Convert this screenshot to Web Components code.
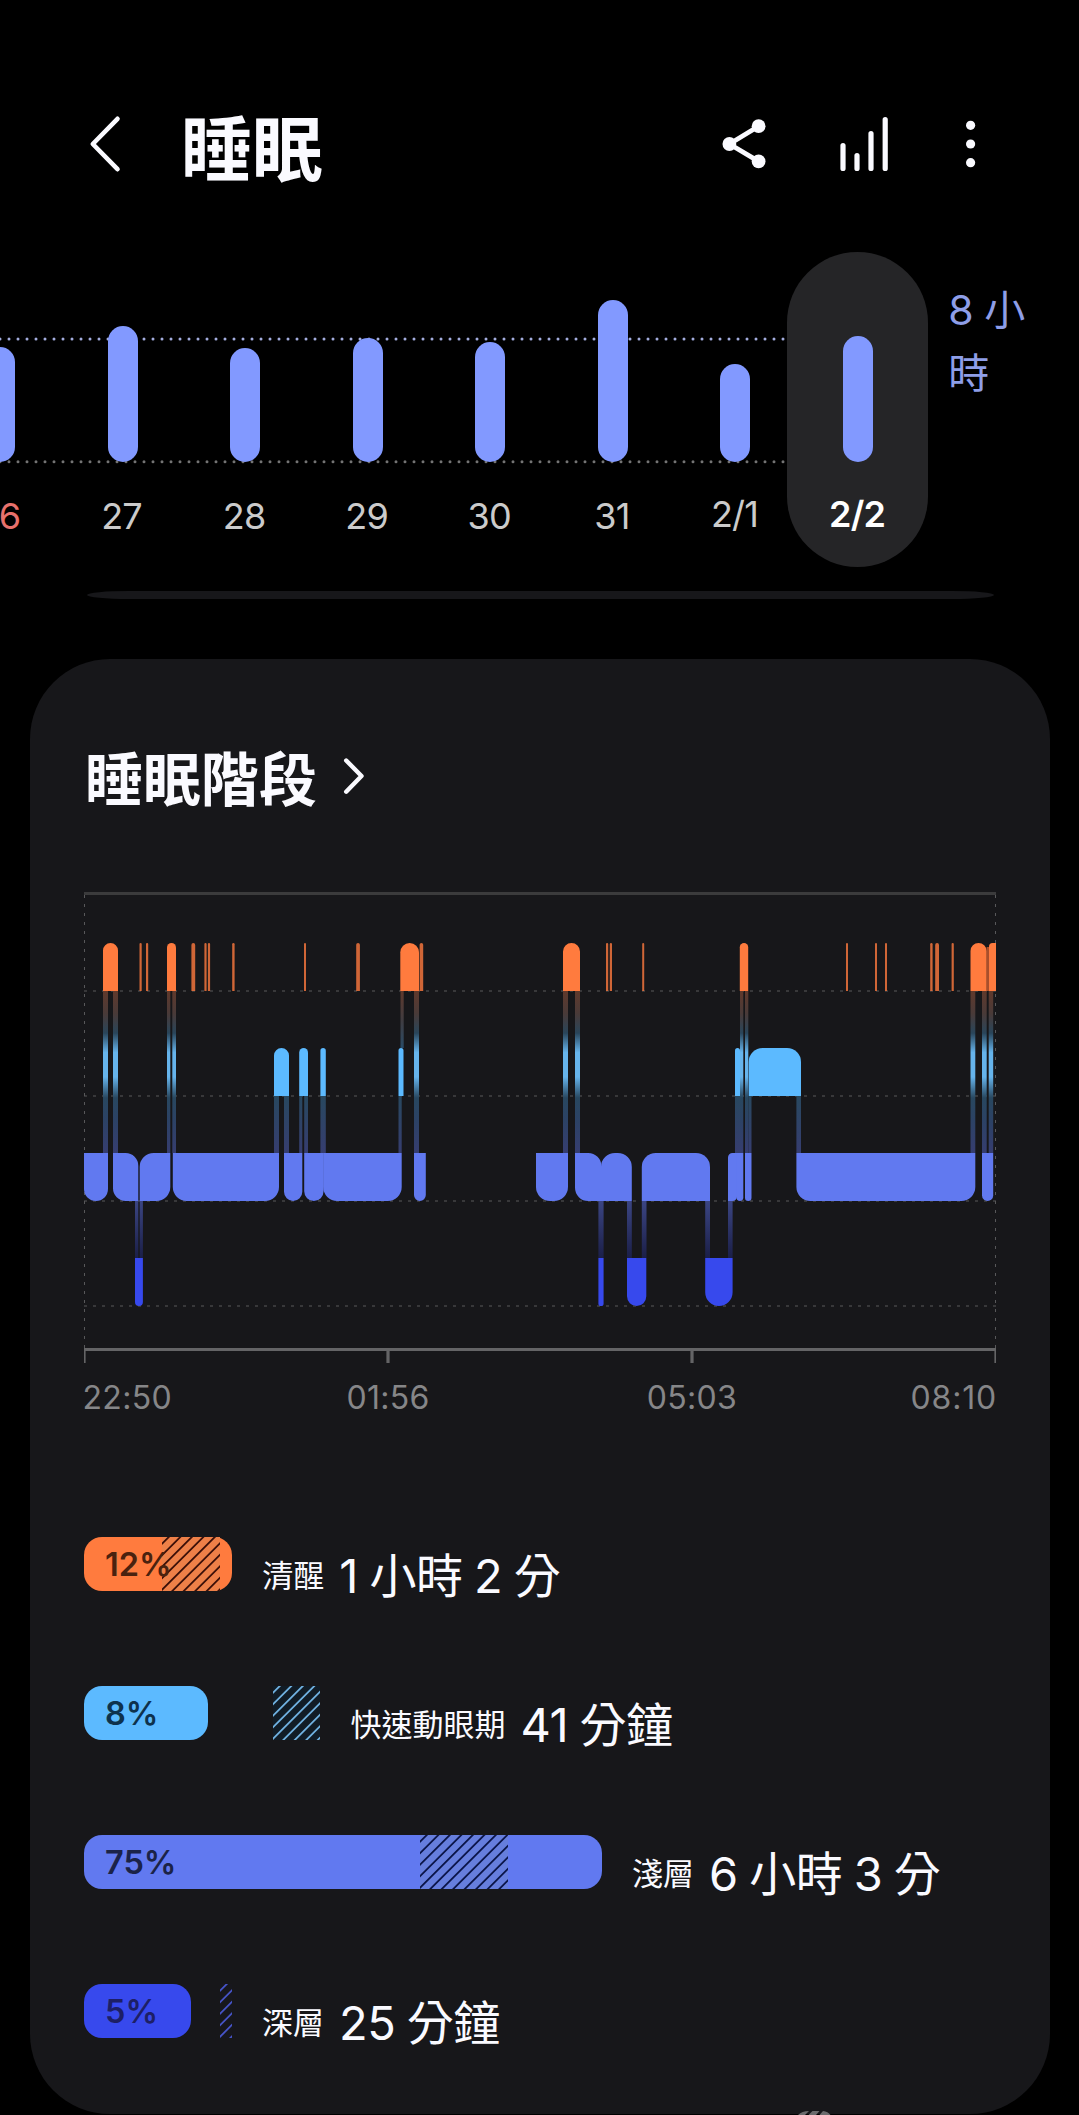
<!DOCTYPE html>
<html lang="zh-Hant">
<head>
<meta charset="UTF-8">
<title>睡眠</title>
<style>
  html, body {
    margin: 0;
    background: #000;
  }
  body {
    width: 1079px;
    height: 2115px;
    overflow: hidden;
    color: #fafaff;
    font-family: Inter, "Noto Sans CJK TC", sans-serif;
  }
</style>
</head>
<body>
<sleep-app></sleep-app>

<script>
// 各睡眠階段的顏色與縱向位置
const STAGES = {
  awake: { y: 943, color: '#ff7b3e' },
  rem: { y: 1048, color: '#5cbaff' },
  light: { y: 1153, color: '#6179f0' },
  deep: { y: 1258, color: '#3749ed' }
};
const STAGE_H = 48;

// 頂部標題列
class SleepHeader extends HTMLElement {
  constructor() {
    super();
    this.attachShadow({ mode: 'open' });
    this.shadowRoot.innerHTML = `
      <style>
        :host {
          display: flex;
          align-items: center;
          height: 252px;
          padding: 0 100px 0 84px;
          box-sizing: border-box;
        }
        svg { display: block; fill: none; stroke: #fafaff; stroke-linecap: round; stroke-linejoin: round; margin-top: 36px; }
        h1 {
          flex: 1;
          margin: 45px 0 0 55px;
          font-size: 71px;
          line-height: 100px;
          font-weight: 700;
        }
        .share { margin-right: 70px; }
        .stats { margin-right: 69px; }
      </style>
      <svg width="42" height="60" viewBox="84 114 42 60" stroke-width="4.6">
        <path d="M117.5 118.8L92.8 144l24.7 25.2"/>
      </svg>
      <h1><slot></slot></h1>
      <svg class="share" width="48" height="60" viewBox="720 114 48 60" stroke-width="4.8">
        <path d="M758.6 126.2L729.4 144l29.2 17.4"/>
        <g fill="#fafaff" stroke="none">
          <circle cx="729.4" cy="144" r="6.9"/>
          <circle cx="758.6" cy="126.2" r="6.9"/>
          <circle cx="758.6" cy="161.4" r="6.9"/>
        </g>
      </svg>
      <svg class="stats" width="52" height="60" viewBox="838 114 52 60" stroke-width="5.2">
        <path d="M843 145.5v23M857 155.5v13M871 133.5v35M885.2 119.5v49"/>
      </svg>
      <svg width="20" height="60" viewBox="959 114 20 60">
        <g fill="#fafaff" stroke="none">
          <circle cx="970.6" cy="125.3" r="4.6"/>
          <circle cx="970.6" cy="144" r="4.6"/>
          <circle cx="970.6" cy="162.7" r="4.6"/>
        </g>
      </svg>
    `;
  }
}

// 單日長條
class SleepDay extends HTMLElement {
  constructor() {
    super();
    this.attachShadow({ mode: 'open' });
  }

  connectedCallback() {
    const h = this.getAttribute('bar');
    this.shadowRoot.innerHTML = `
      <style>
        :host {
          position: relative;
          display: flex;
          flex-direction: column;
          align-items: center;
          justify-content: flex-end;
          width: 122.6px;
          height: 315px;
          color: #cbcbcb;
          font-size: 36px;
          flex: none;
        }
        :host([sunday]) { color: #e8716c; }
        /* 選取日的膠囊底 */
        :host([selected])::before {
          content: '';
          position: absolute;
          inset: 0 -8.7px 0 -9.7px;
          border-radius: 71px;
          background: #252527;
        }
        :host([selected]) { color: #fff; font-weight: 600; }
        .bar {
          position: relative;
          width: 30px;
          height: ${h}px;
          border-radius: 15px;
          background: #8299ff;
        }
        .label {
          position: relative;
          height: 73px;
          line-height: 44px;
          padding: 32px 2px 0 0;
          letter-spacing: -0.8px;
          white-space: nowrap;
        }
        :host([slash]) .label { height: 75px; padding-top: 30px; }
      </style>
      <div class="bar"></div>
      <div class="label"><slot></slot></div>
    `;
  }
}

// 每週長條圖
class SleepWeek extends HTMLElement {
  constructor() {
    super();
    this.attachShadow({ mode: 'open' });
    this.shadowRoot.innerHTML = `
      <style>
        :host { display: grid; width: 1079px; height: 315px; overflow: hidden; }
        svg, .days { grid-area: 1 / 1; }
        svg { display: block; }
        .days { display: flex; margin-left: -61.4px; }
        .goal {
          flex: none;
          width: 92px;
          margin: 27px 0 0 29px;
          color: #8e9ee8;
          font-size: 41px;
          line-height: 62.6px;
          word-spacing: -1px;
        }
      </style>
      <svg width="1079" height="315" viewBox="0 252 1079 315" fill="none" stroke-width="3" stroke-linecap="round" stroke-dasharray="0 9">
        <path d="M0 339H784" stroke="#a3adde"/>
        <path d="M0 461.7H784" stroke="#747474"/>
      </svg>
      <div class="days">
        <slot></slot>
        <div class="goal"><slot name="goal"></slot></div>
      </div>
    `;
  }
}

// 卡片
class SleepCard extends HTMLElement {
  constructor() {
    super();
    this.attachShadow({ mode: 'open' });
    this.shadowRoot.innerHTML = `
      <style>
        :host {
          display: block;
          width: 1020px;
          height: 1455px;
          margin: 60px 0 0 30px;
          padding: 81px 54px 0;
          box-sizing: border-box;
          border-radius: 80px;
          background: #17171a;
        }
        .title { display: flex; align-items: flex-start; height: 152px; }
        h2 { margin: 0 0 0 1px; font-size: 58px; line-height: 80px; font-weight: 700; }
        svg { margin: 16px 0 0 23px; }
      </style>
      <div class="title">
        <h2><slot name="title"></slot></h2>
        <svg width="28" height="40" viewBox="340 756 28 40" fill="none" stroke="#fafaff" stroke-width="4.4" stroke-linecap="round" stroke-linejoin="round">
          <path d="M346.2 760.5L361.5 776l-15.3 15.7"/>
        </svg>
      </div>
      <slot></slot>
    `;
  }
}

// 睡眠階段圖
class StageChart extends HTMLElement {
  constructor() {
    super();
    this.attachShadow({ mode: 'open' });
    // [起點, 終點, 圓角位置(tl tr br bl)]
    this._segments = {
      awake: [
        [103, 118], [139.5, 141.7], [146, 148.2], [167, 176], [191.4, 195.2], [204.4, 206.6],
        [207.9, 210.1], [232.2, 234.6], [304, 306], [356.2, 359.9], [400.3, 419], [419.6, 423.2],
        [563, 580], [606, 608.2], [609.8, 612], [642.2, 644.2], [739.8, 748.2], [846, 848],
        [875, 877], [885, 887], [930.2, 932.6], [935.2, 939], [951.6, 953.8], [970.5, 986.6],
        [989, 996, '1000']
      ],
      rem: [[274, 289], [299.2, 308], [320.4, 325.8], [398.5, 403.5], [735, 740], [748.7, 801]],
      light: [
        [84, 108, '0011'], [113, 138.3, '0101'], [139.7, 170.3, '1010'], [172.8, 279, '0011'],
        [284, 302.3, '0011'], [304.2, 323.6, '0011'], [323.2, 401.7, '0011'], [414, 425.8, '0011'],
        [536, 568, '0011'], [575, 601.4, '0101'], [601, 631.8, '1100'], [641.8, 710, '1100'],
        [728, 737, '1010'], [736.5, 743.3, '0011'], [745, 751.5, '0011'], [796.4, 975.3, '0011'],
        [982, 993.2, '0011']
      ],
      deep: [[135, 142.9, '0011'], [598.4, 603.6, '0011'], [627, 646.3, '0011'], [705.2, 732.6, '0011']]
    };
    this._links = {
      al: [[103, 108], [113, 118], [167, 170.3], [172.3, 176], [414, 419], [563, 568], [575, 580],
        [740, 743.3], [745, 748.3], [970.5, 975.3], [982, 986.7], [988.7, 993.2]],
      ar: [[400.5, 403.7]],
      rl: [[274, 279], [284, 289], [299.2, 302.3], [304.2, 308], [320.4, 325.8], [398.5, 401.7],
        [735, 740], [748.3, 751.5], [796.4, 801]],
      ld: [[135, 138.3], [139.7, 142.9], [598.4, 603.6], [627, 631.8], [641.8, 646.5],
        [705.2, 710], [728, 732.6]]
    };
  }

  connectedCallback() {
    this.render();
  }

  // 產生帶圓角的區段路徑
  _segmentPath(x1, x2, y, corners) {
    const r = Math.min((x2 - x1) / 2, 14);
    const [tl, tr, br, bl] = corners.split('').map(c => (c === '1' ? r : 0));
    const y2 = y + STAGE_H;
    return `M${x1} ${y + tl}A${tl} ${tl} 0 0 1 ${x1 + tl} ${y}H${x2 - tr}A${tr} ${tr} 0 0 1 ${x2} ${y + tr}` +
      `V${y2 - br}A${br} ${br} 0 0 1 ${x2 - br} ${y2}H${x1 + bl}A${bl} ${bl} 0 0 1 ${x1} ${y2 - bl}Z`;
  }

  _renderSegments() {
    return Object.keys(this._segments).map(name => {
      const { y, color } = STAGES[name];
      return this._segments[name].map(([x1, x2, corners = '1100']) => {
        const opacity = x2 - x1 < 4 ? 0.8 : 1;
        return `<path fill="${color}" opacity="${opacity}" d="${this._segmentPath(x1, x2, y, corners)}"/>`;
      }).join('');
    }).join('');
  }

  _renderLinks() {
    const range = { al: [991, 1153], ar: [991, 1048], rl: [1096, 1153], ld: [1201, 1258] };
    return Object.keys(this._links).map(name => {
      const [y1, y2] = range[name];
      return this._links[name].map(([x1, x2]) =>
        `<rect x="${x1}" y="${y1}" width="${x2 - x1}" height="${y2 - y1}" fill="url(#${name})"/>`
      ).join('');
    }).join('');
  }

  render() {
    this.shadowRoot.innerHTML = `
      <style>
        :host { display: block; width: 912px; }
        svg { display: block; }
        .axis {
          display: grid;
          grid-template-columns: 152px 304px 304px 152px;
          margin-top: 15px;
          color: #868688;
          font-size: 32px;
          line-height: 40px;
          letter-spacing: 0.3px;
          text-align: center;
        }
        .axis span:first-child { text-align: left; margin-left: -1.5px; }
        .axis span:last-child { text-align: right; margin-right: -1px; letter-spacing: 0.8px; }
      </style>
      <svg width="912" height="471" viewBox="84 892 912 471">
        <defs>
          <linearGradient id="al" x2="0" y2="1">
            <stop offset="0" stop-color="#60392c"/>
            <stop offset=".14" stop-color="#493a38"/>
            <stop offset=".26" stop-color="#29455a"/>
            <stop offset=".38" stop-color="#66b4ec"/>
            <stop offset=".53" stop-color="#66b4ec"/>
            <stop offset=".66" stop-color="#28475f"/>
            <stop offset=".8" stop-color="#2c4265"/>
            <stop offset="1" stop-color="#363d70"/>
          </linearGradient>
          <linearGradient id="ar" x2="0" y2="1">
            <stop offset="0" stop-color="#60392c"/>
            <stop offset=".5" stop-color="#413c40"/>
            <stop offset="1" stop-color="#2a4b66"/>
          </linearGradient>
          <linearGradient id="rl" x2="0" y2="1">
            <stop offset="0" stop-color="#28485f"/>
            <stop offset="1" stop-color="#363d70"/>
          </linearGradient>
          <linearGradient id="ld" x2="0" y2="1">
            <stop offset="0" stop-color="#3b4583"/>
            <stop offset="1" stop-color="#1b1f48"/>
          </linearGradient>
        </defs>
        <path d="M84 893.5H996" stroke="#3b3b3c" stroke-width="3"/>
        <path d="M84 991H996M84 1096H996M84 1201H996M84 1306H996" stroke="#38383a" stroke-width="2" stroke-dasharray="3 6"/>
        <path d="M84.5 895V1348M995.5 895V1348" stroke="#58585a" stroke-width="1" stroke-dasharray="3 6"/>
        ${this._renderLinks()}
        <rect x="986.6" y="947" width="2.4" height="44" fill="#a94f2b"/>
        ${this._renderSegments()}
        <path d="M84 1349.5H996" stroke="#646466" stroke-width="3"/>
        <path d="M84.8 1350v13M995.2 1350v13" stroke="#646466" stroke-width="1.6"/>
        <path d="M388 1350v13M692 1350v13" stroke="#646466" stroke-width="3.2"/>
      </svg>
      <div class="axis"><span>22:50</span><span>01:56</span><span>05:03</span><span>08:10</span></div>
    `;
  }
}

// 各階段比例列
class StageRow extends HTMLElement {
  constructor() {
    super();
    this.attachShadow({ mode: 'open' });
  }

  connectedCallback() {
    this.render();
  }

  // 典型範圍的斜線
  _hatch(width) {
    let d = '';
    for (let s = 6.8; s < width + 54; s += 11.5) {
      d += `M${s + 2} -2L${s - 56} 56`;
    }
    return d;
  }

  render() {
    const attr = name => this.getAttribute(name);
    const color = STAGES[attr('stage')].color;
    const hw = parseFloat(attr('hatch-width'));
    this.shadowRoot.innerHTML = `
      <style>
        :host { display: flex; align-items: flex-start; height: 54px; margin-bottom: 95px; white-space: nowrap; }
        .track { display: grid; justify-items: start; }
        .bar, svg, .percent { grid-area: 1 / 1; }
        .bar {
          width: ${attr('bar')}px;
          height: 54px;
          border-radius: 18px;
          background: ${color};
        }
        .percent {
          margin: 1px 0 -1px 21px;
          color: ${attr('ink')};
          font-size: 32.5px;
          font-weight: 600;
          line-height: 54px;
        }
        svg { display: block; margin-left: ${attr('hatch-x')}px; }
        .name { margin: 12px 0 0 30px; font-size: 31px; line-height: 54px; }
        .time {
          margin: 12px 0 0 15px;
          font-size: 47px;
          line-height: 54px;
          letter-spacing: -0.5px;
          word-spacing: -1.2px;
        }
      </style>
      <div class="track">
        <div class="bar"></div>
        <svg width="${hw}" height="54" viewBox="0 0 ${hw} 54">
          <rect width="${hw}" height="54" fill="${attr('tint')}"/>
          <path d="${this._hatch(hw)}" stroke="${attr('line')}" stroke-width="1.8"/>
        </svg>
        <div class="percent">${attr('percent')}</div>
      </div>
      <div class="name"><slot name="name"></slot></div>
      <div class="time"><slot></slot></div>
    `;
  }
}

// 頁面
class SleepApp extends HTMLElement {
  constructor() {
    super();
    this.attachShadow({ mode: 'open' });
    this.shadowRoot.innerHTML = `
      <style>
        :host { display: block; position: relative; width: 1079px; height: 2115px; overflow: hidden; }
        .divider {
          width: 907px;
          height: 8px;
          margin: 24px 0 0 86.5px;
          border-radius: 42px / 4px;
          background: #17171a;
        }
        .rows { margin-top: 119px; }
        .watermark { position: absolute; left: 796px; bottom: 0; }
      </style>
      <sleep-header>睡眠</sleep-header>
      <sleep-week>
        <sleep-day sunday bar="115.3">26</sleep-day>
        <sleep-day bar="136.3">27</sleep-day>
        <sleep-day bar="114.3">28</sleep-day>
        <sleep-day bar="123.7">29</sleep-day>
        <sleep-day bar="120">30</sleep-day>
        <sleep-day bar="162">31</sleep-day>
        <sleep-day slash bar="97.7">2/1</sleep-day>
        <sleep-day slash selected bar="126">2/2</sleep-day>
        <span slot="goal">8 小時</span>
      </sleep-week>
      <div class="divider"></div>
      <sleep-card>
        <span slot="title">睡眠階段</span>
        <stage-chart></stage-chart>
        <div class="rows">
          <stage-row stage="awake" bar="148.3" percent="12%" hatch-x="78" hatch-width="58" ink="#4a220f" tint="#ee8048" line="#3b0f08">
            <span slot="name">清醒</span>1 小時 2 分
          </stage-row>
          <stage-row stage="rem" bar="124" percent="8%" hatch-x="189.2" hatch-width="47.3" ink="#0e324d" tint="#111c26" line="#70b2e2">
            <span slot="name">快速動眼期</span>41 分鐘
          </stage-row>
          <stage-row stage="light" bar="518" percent="75%" hatch-x="336" hatch-width="88" ink="#1b2348" tint="#667edd" line="#0b1548">
            <span slot="name">淺層</span>6 小時 3 分
          </stage-row>
          <stage-row stage="deep" bar="107" percent="5%" hatch-x="136" hatch-width="12" ink="#1d1f66" tint="#17171d" line="#4654c8">
            <span slot="name">深層</span>25 分鐘
          </stage-row>
        </div>
      </sleep-card>
      <svg class="watermark" width="36" height="4" viewBox="796 2111 36 4" fill="#6b6b6d">
        <path d="M798 2115q4-4 11-4l-4 4zM808.5 2115l4-4h7l-3.5 4zM819.5 2115l3.500-4q5 .5 7.500 4z"/>
      </svg>
    `;
  }
}

customElements.define('sleep-header', SleepHeader);
customElements.define('sleep-day', SleepDay);
customElements.define('sleep-week', SleepWeek);
customElements.define('sleep-card', SleepCard);
customElements.define('stage-chart', StageChart);
customElements.define('stage-row', StageRow);
customElements.define('sleep-app', SleepApp);
</script>
</body>
</html>
